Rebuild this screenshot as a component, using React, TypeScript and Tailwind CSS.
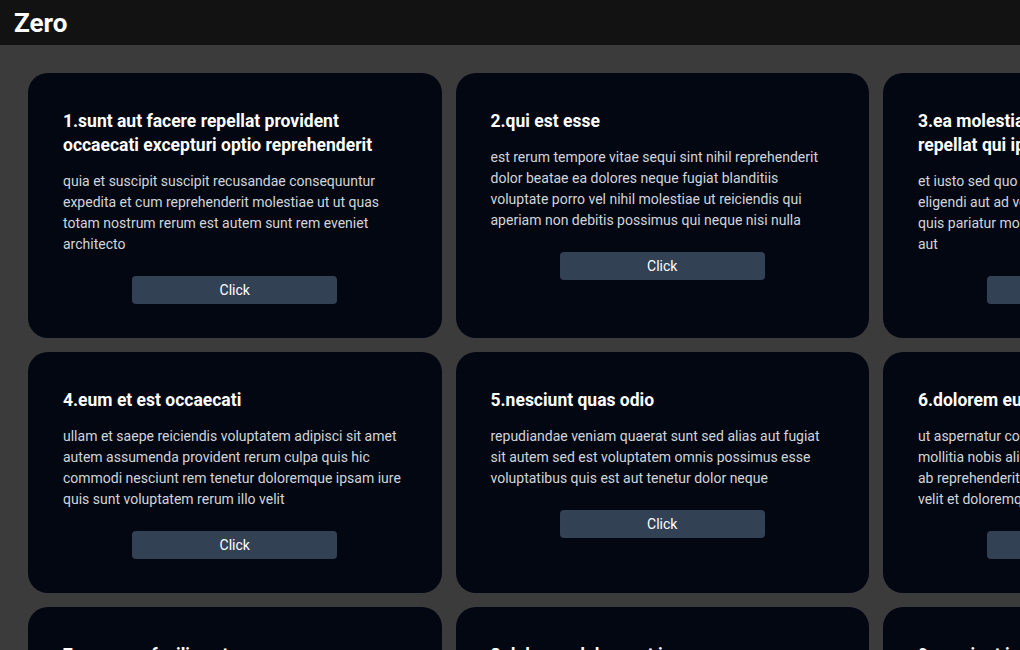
import React from 'react';

interface Post {
  id: number;
  title: string;
  body: string;
}

const posts: Post[] = [
  {
    id: 1,
    title: 'sunt aut facere repellat provident occaecati excepturi optio reprehenderit',
    body: 'quia et suscipit suscipit recusandae consequuntur expedita et cum reprehenderit molestiae ut ut quas totam nostrum rerum est autem sunt rem eveniet architecto',
  },
  {
    id: 2,
    title: 'qui est esse',
    body: 'est rerum tempore vitae sequi sint nihil reprehenderit dolor beatae ea dolores neque fugiat blanditiis voluptate porro vel nihil molestiae ut reiciendis qui aperiam non debitis possimus qui neque nisi nulla',
  },
  {
    id: 3,
    title: 'ea molestias quasi exercitationem repellat qui ipsa sit aut',
    body: 'et iusto sed quo iure voluptatem occaecati omnis eligendi aut ad voluptatem doloribus vel accusantium quis pariatur molestiae porro eius odio et labore et velit aut',
  },
  {
    id: 4,
    title: 'eum et est occaecati',
    body: 'ullam et saepe reiciendis voluptatem adipisci sit amet autem assumenda provident rerum culpa quis hic commodi nesciunt rem tenetur doloremque ipsam iure quis sunt voluptatem rerum illo velit',
  },
  {
    id: 5,
    title: 'nesciunt quas odio',
    body: 'repudiandae veniam quaerat sunt sed alias aut fugiat sit autem sed est voluptatem omnis possimus esse voluptatibus quis est aut tenetur dolor neque',
  },
  {
    id: 6,
    title: 'dolorem eum magni eos aperiam quia',
    body: 'ut aspernatur corporis harum nihil quis provident sequi mollitia nobis aliquid molestiae perspiciatis et ea nemo ab reprehenderit accusantium quas voluptate dolores velit et doloremque molestiae',
  },
  {
    id: 7,
    title: 'magnam facilis autem',
    body: 'dolore placeat quibusdam ea quo vitae magni quis enim qui quis quo nemo aut saepe quidem repellat excepturi ut quia sunt ut sequi eos ea sed quas',
  },
  {
    id: 8,
    title: 'dolorem dolore est ipsam',
    body: 'dignissimos aperiam dolorem qui eum facilis quibusdam animi sint suscipit qui sint possimus cum quaerat magni maiores excepturi ipsam ut commodi dolor voluptatum modi aut vitae',
  },
  {
    id: 9,
    title: 'nesciunt iure omnis dolorem tempora et accusantium',
    body: 'consectetur animi nesciunt iure dolore enim quia ad veniam autem ut quam aut nobis et est aut quod aut provident voluptas autem voluptas',
  },
];

const PostCard: React.FC<{ post: Post }> = ({ post }) => (
  <div className="flex flex-col rounded-[20px] bg-[#030712] px-[35px] pt-[36px] pb-[34px]">
    <h2 className="text-[17.5px] leading-6 font-bold text-white">
      {`${post.id}.${post.title}`}
    </h2>
    <p className="mt-[14px] text-sm leading-[21px] text-[#d1d5db]">{post.body}</p>
    <div className="mt-[21px] flex justify-center">
      <button className="h-[28px] w-[205px] rounded bg-[#334155] text-sm text-white">
        Click
      </button>
    </div>
  </div>
);

export default function App() {
  return (
    <div
      className="min-h-screen w-full overflow-hidden bg-[#3b3b3b]"
      style={{ fontFamily: 'Roboto, "Liberation Sans", sans-serif' }}
    >
      {/* Header */}
      <header className="flex h-[45px] items-center bg-[#121212] px-[14px]">
        <h1 className="text-[26px] leading-none font-bold text-white">Zero</h1>
      </header>

      {/* Posts */}
      <main className="grid w-max grid-cols-[413.5px_413.5px_413.5px] items-stretch gap-[14px] px-[28px] py-[28px]">
        {posts.map((post) => (
          <PostCard key={post.id} post={post} />
        ))}
      </main>
    </div>
  );
}
